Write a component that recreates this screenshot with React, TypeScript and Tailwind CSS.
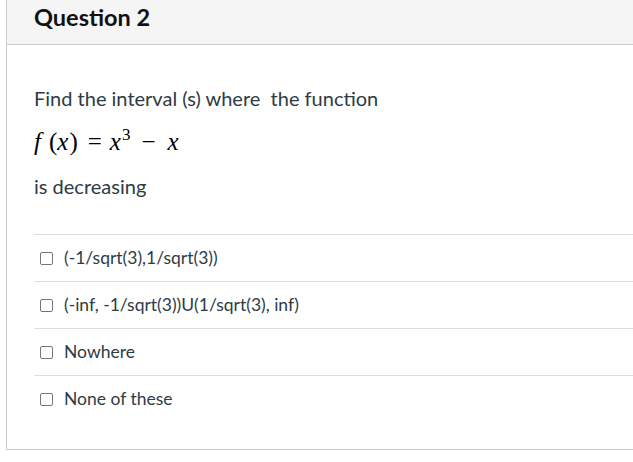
import React from "react";

const options = [
  "(-1/sqrt(3),1/sqrt(3))",
  "(-inf, -1/sqrt(3))U(1/sqrt(3), inf)",
  "Nowhere",
  "None of these",
];

export default function App() {
  return (
    <div className="w-[633px] h-[462px] bg-white overflow-hidden font-['Lato',sans-serif]">
      <div className="ml-[6px] w-[700px] h-[450px] border-l border-b border-[#c7cdd1] flex flex-col">
        <div className="h-[45px] bg-[#f5f5f5] border-b border-[#c7cdd1] pl-[27px] pt-[4px]">
          <h2 className="text-[23.5px] font-bold text-[#111] leading-[26px]">Question 2</h2>
        </div>
        <div className="pl-[27px] pt-[41px] text-[#2d3b45]">
          <p className="text-[20px] leading-[24px]">Find the interval (s) where&nbsp; the function</p>
          <p className="mt-[18px] h-[28px] text-[25px] leading-[28px] text-black whitespace-nowrap font-['Liberation_Serif',serif] flex items-baseline">
            <i>f</i>
            <span className="ml-[8px]">(</span>
            <i>x</i>
            <span className="ml-[1px]">)</span>
            <span className="ml-[10px]">=</span>
            <i className="ml-[8px]">x</i>
            <span className="text-[17px] relative top-[-10px] ml-[1px]">3</span>
            <span className="ml-[11px]">−</span>
            <i className="ml-[12px]">x</i>
          </p>
          <p className="mt-[18px] text-[20px] leading-[24px]">is decreasing</p>
          <div className="mt-[36px] border-t border-[#dddddd]">
            {options.map((o) => (
              <div key={o} className="h-[47px] border-b border-[#dddddd] flex items-center pl-[6px] last:border-b-0">
                <span className="w-[13px] h-[13px] border border-[#767676] rounded-[2px] bg-white shrink-0" />
                <span className="ml-[11px] text-[17.5px] text-[#2d3b45]">{o}</span>
              </div>
            ))}
          </div>
        </div>
      </div>
    </div>
  );
}
